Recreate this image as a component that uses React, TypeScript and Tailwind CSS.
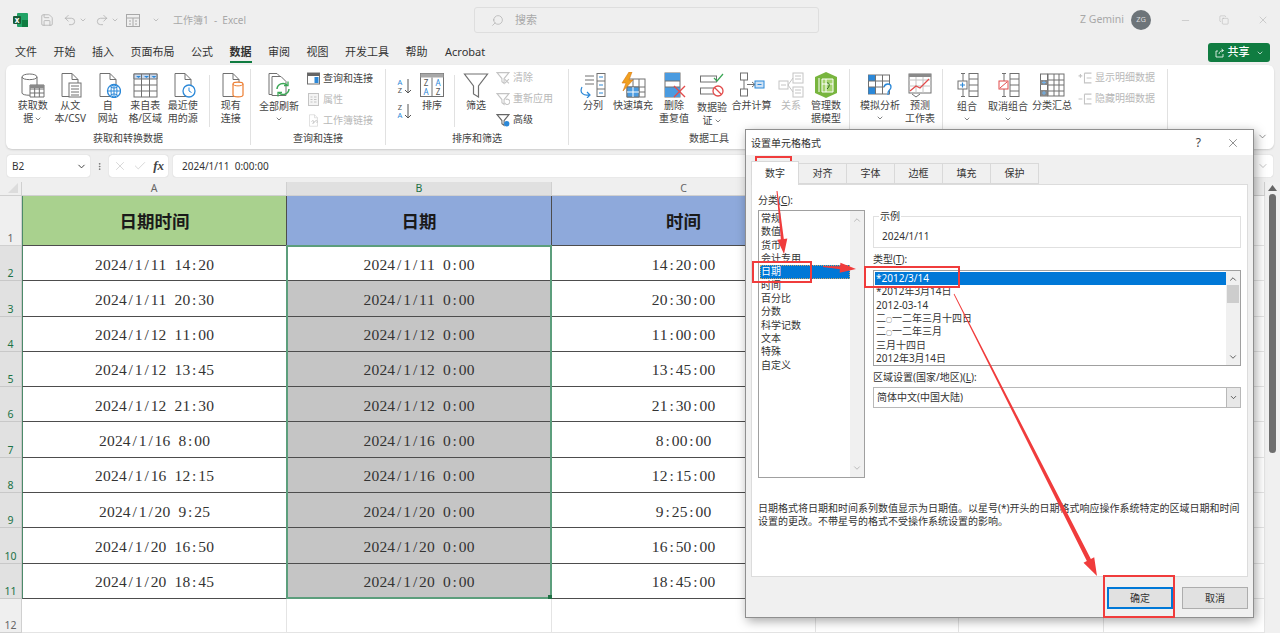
import React from "react";
import { ChevronDown, ChevronUp, Minus, Redo2, Save, Search, Undo2, X, Copy, Check, MoreVertical } from "lucide-react";

const G = "#707070";
const L = "#c4c4c4";
const B = "#2b88d8";

const Doc = ({ c = G }: { c?: string }) => (
  <path d="M5 1.5h10l6 6v17H5zM15 1.5v6h6" fill="#fff" stroke={c} strokeWidth="1" />
);
const Ic = ({ children, s = 26 }: { children: React.ReactNode; s?: number }) => (
  <svg width={s} height={s} viewBox="0 0 26 26" fill="none" className="shrink-0">
    {children}
  </svg>
);
const Mini = ({ x, y, w, h, c, r }: { x: number; y: number; w: number; h: number; c: number; r: number }) => {
  const lines = [];
  for (let i = 0; i <= c; i++) lines.push(<path key={"c" + i} d={`M${x + (w / c) * i} ${y}v${h}`} />);
  for (let i = 0; i <= r; i++) lines.push(<path key={"r" + i} d={`M${x} ${y + (h / r) * i}h${w}`} />);
  return <g stroke={G} strokeWidth="1">{lines}</g>;
};

const icons: Record<string, React.ReactNode> = {
  db: (
    <Ic>
      <path d="M2 5c0-4 15-4 15 0v16c0 3-15 3-15 0z" fill="#fff" stroke={G} />
      <path d="M2 5c0 3.500 15 3.500 15 0" stroke={G} />
      <rect x="10" y="13" width="14" height="12" fill="#fff" />
      <Mini x={10} y={13} w={14} h={12} c={3} r={3} />
      <path d="M10 13h14v3h-14z" fill="#8a8a8a" />
    </Ic>
  ),
  text: (
    <Ic>
      <Doc />
      <rect x="12" y="11" width="12" height="14" fill="#fff" stroke={G} />
      <path d="M14 14h8M14 17h8M14 20h8M14 23h8" stroke={G} />
    </Ic>
  ),
  web: (
    <Ic>
      <Doc />
      <circle cx="19" cy="19" r="6.500" fill="#fff" stroke={B} strokeWidth="1.300" />
      <path d="M12.500 19h13M19 12.500v13M15 14.500c3 2 5 2 8 0M15 23.500c3-2 5-2 8 0" stroke={B} />
      <ellipse cx="19" cy="19" rx="3" ry="6.500" stroke={B} />
    </Ic>
  ),
  table: (
    <Ic>
      <rect x="2" y="2" width="23" height="23" fill="#fff" stroke={G} />
      <path d="M2 2h23v5H2z" fill="#c9d9ee" stroke={G} />
      <path d="M9.500 2v23M17.500 2v23M2 13h23M2 19h23" stroke={G} />
      <path d="M4 4l2.500 2L9 4zM12 4l2.500 2L17 4zM19.500 4l2.500 2 2.500-2z" fill={B} />
    </Ic>
  ),
  recent: (
    <Ic>
      <Doc />
      <circle cx="19" cy="19" r="6" fill="#fff" stroke={B} strokeWidth="1.300" />
      <path d="M19 15.500V19l2.500 1.500" stroke={B} />
    </Ic>
  ),
  exist: (
    <Ic>
      <Doc />
      <path d="M15 12c0-2.500 10-2.500 10 0v11c0 2.500-10 2.500-10 0z" fill="#fff" stroke="#ed7d31" strokeWidth="1.200" />
      <path d="M15 12c0 2.500 10 2.500 10 0" stroke="#ed7d31" />
    </Ic>
  ),
  refresh: (
    <Ic>
      <path d="M3 1.500h8l5 5v16H3z" fill="#fff" stroke={G} />
      <path d="M6 4.500h9l5 5v14H6z" fill="#fff" stroke={G} />
      <path d="M11 17a6 6 0 0 1 10-4M23 17a6 6 0 0 1-10 4" stroke="#3aa655" strokeWidth="1.500" />
      <path d="M22 9.500v4h-4M12 24.500v-4h4" stroke="#3aa655" strokeWidth="1.300" />
    </Ic>
  ),
  sort: (
    <Ic>
      <rect x="1.500" y="1.500" width="23" height="23" fill="#fff" stroke={G} />
      <path d="M1.500 1.500h23v4h-23z" fill="#a8a8a8" />
      <path d="M13 5.500v19" stroke={G} />
      <text x="7" y="14" fontSize="8" textAnchor="middle" fill="#555">Z</text>
      <text x="7" y="23" fontSize="8" textAnchor="middle" fill={B}>A</text>
      <text x="19" y="14" fontSize="8" textAnchor="middle" fill={B}>A</text>
      <text x="19" y="23" fontSize="8" textAnchor="middle" fill="#555">Z</text>
    </Ic>
  ),
  filter: (
    <Ic>
      <path d="M1.500 2h23l-9 12v11l-5-3v-8z" fill="#fff" stroke={G} strokeWidth="1.200" />
    </Ic>
  ),
  split: (
    <Ic>
      <path d="M5 4h9M5 8h9M5 12h9" stroke={G} />
      <rect x="17" y="1.500" width="8" height="23" fill="#fff" stroke={G} />
      <path d="M17 9h8M17 17h8" stroke={G} />
      <path d="M19 5h4M19 13h4M19 21h4" stroke={B} />
      <path d="M2 15c-3 6 2 9 7 8M7 20l3 3-3 3" stroke={B} strokeWidth="1.200" />
    </Ic>
  ),
  flash: (
    <Ic>
      <rect x="7" y="7" width="18" height="18" fill="#fff" stroke={G} />
      <path d="M7 15h18M7 20h18M13 7v18M19 7v18" stroke={G} />
      <path d="M7 15h12v10H7z" fill="#4a9be0" stroke={G} />
      <path d="M7 20h12M13 15v10" stroke="#fff" />
      <path d="M9 0L2 11h4l-3 8 10-11H9l3-8z" fill="#f0a020" stroke="#d87818" strokeWidth=".6" />
    </Ic>
  ),
  dup: (
    <Ic>
      <rect x="4" y="1" width="15" height="24" fill="#fff" stroke={G} />
      <path d="M4 1h15v8H4z" fill="#4a9be0" />
      <path d="M4 15h15v10H4z" fill="#4a9be0" />
      <path d="M4 9h15M4 15h15" stroke={G} />
      <path d="M13 14l11 11M24 14L13 25" stroke="#e24b4b" strokeWidth="1.400" />
    </Ic>
  ),
  valid: (
    <Ic>
      <rect x="1.500" y="4" width="16" height="6" fill="#fff" stroke={G} />
      <rect x="1.500" y="16" width="16" height="6" fill="#fff" stroke={G} />
      <path d="M15 6l3 3 6-7" stroke="#3aa655" strokeWidth="1.200" />
      <circle cx="19" cy="19" r="5" fill="#fff" stroke="#e24b4b" strokeWidth="1.300" />
      <path d="M15.500 15.500l7 7" stroke="#e24b4b" strokeWidth="1.300" />
    </Ic>
  ),
  merge: (
    <Ic>
      <rect x="1.500" y="1" width="7" height="7" stroke={G} />
      <rect x="1.500" y="17" width="7" height="7" stroke={G} />
      <path d="M5 8v9M8 12.500h8M13 10l3 2.500-3 2.500" stroke={G} />
      <rect x="16" y="9" width="9" height="7" fill="#cfe2f5" stroke={B} />
      <path d="M18.500 12.500h4" stroke={B} />
    </Ic>
  ),
  rel: (
    <Ic>
      <rect x="1" y="9" width="9" height="8" stroke={L} />
      <rect x="15" y="1" width="10" height="10" stroke={L} />
      <rect x="15" y="15" width="10" height="10" stroke={L} />
      <path d="M10 13l5-7M10 13l5 7M3 13h5M17 4h6M17 7h6M17 18h6M17 21h6" stroke={L} />
    </Ic>
  ),
  model: (
    <Ic>
      <path d="M13 0l11 5v16l-11 5-11-5V5z" fill="#78b53e" />
      <path d="M9 7h11v13H9z" fill="#a5d36e" stroke="#fff" />
      <path d="M6 6v14M13 7v13M9 12h11" stroke="#fff" />
      <path d="M14 11c3-1 3 4 0 6" stroke="#2f6e1c" />
    </Ic>
  ),
  whatif: (
    <Ic>
      <rect x="1.500" y="3" width="21" height="19" fill="#fff" stroke={G} />
      <path d="M1.500 3h7v6h-7zM1.500 15h7v7h-7z" fill={B} />
      <path d="M8.500 3v19M15.500 3v19M1.500 9h21M1.500 15h21" stroke={G} />
      <path d="M17 15c1-4 7-4 7 0 0 3-3 3-3 6v2" stroke={B} strokeWidth="1.300" fill="#fff" />
    </Ic>
  ),
  forecast: (
    <Ic>
      <rect x="2" y="2" width="22" height="19" fill="#fff" stroke={G} />
      <path d="M2 8h22M2 14h22M9 2v19M16 2v19" stroke={L} />
      <path d="M2 2h22v3H2z" fill="#8a8a8a" />
      <path d="M3 19l6-5 4 2 9-9" stroke="#e24b4b" strokeWidth="1.300" />
      <path d="M5 22l4 3 4-3" stroke={G} />
    </Ic>
  ),
  group: (
    <Ic>
      <rect x="15" y="1.500" width="9" height="23" fill="#fff" stroke={G} />
      <path d="M15 7h9M15 13h9M15 19h9M7 1.500h4M7 24.500h4M9 1.500V10M9 16v8.500" stroke={G} />
      <rect x="4" y="9" width="9" height="8" fill="#fff" stroke={G} />
      <path d="M6 13h5M8.500 10.500v5" stroke={B} strokeWidth="1.200" />
    </Ic>
  ),
  ungroup: (
    <Ic>
      <rect x="15" y="1.500" width="9" height="23" fill="#fff" stroke={G} />
      <path d="M15 7h9M15 13h9M15 19h9M7 1.500h4M7 24.500h4M9 1.500V9M9 17v7.500" stroke={G} />
      <rect x="4" y="9" width="9" height="8" fill="#fff" stroke="#e24b4b" />
      <path d="M5 16l7-6" stroke="#e24b4b" />
    </Ic>
  ),
  subtotal: (
    <Ic>
      <rect x="9" y="2" width="16" height="22" fill="#fff" stroke={G} />
      <path d="M9 8h16M9 13h16M9 19h16M15 2v22M20 2v22" stroke={G} />
      <rect x="1.500" y="2" width="7" height="22" fill="#fff" stroke={G} />
      <path d="M1.500 8h7v5h-7zM1.500 18h7v6h-7z" fill="#888" />
      <path d="M3 10.500h4M3 21h4M5 8.500v4M5 19v4" stroke="#6fb1ec" />
    </Ic>
  ),
};

const small: Record<string, React.ReactNode> = {
  query: (
    <Ic s={13}>
      <rect x="1" y="2" width="24" height="22" fill="#fff" stroke={G} strokeWidth="2" />
      <path d="M1 2h24v6H1z" fill="#666" />
      <rect x="15" y="10" width="8" height="12" fill={B} />
    </Ic>
  ),
  prop: (
    <Ic s={13}>
      <rect x="3" y="1" width="20" height="24" fill="#f4f4f4" stroke={L} strokeWidth="2" />
      <path d="M7 8h4M14 8h5M7 13h4M14 13h5M7 18h4M14 18h5" stroke={L} strokeWidth="2" />
    </Ic>
  ),
  link: (
    <Ic s={13}>
      <Doc c={L} />
      <path d="M11 20l6-6M9 15c4-4 6 0 3 3M17 13c3-2 5 3 2 5" stroke={L} strokeWidth="2" />
    </Ic>
  ),
  clear: (
    <Ic s={14}>
      <path d="M2 3h22l-9 11v9l-4-3v-6z" stroke={L} strokeWidth="2" />
      <path d="M16 15l8 8M24 15l-8 8" stroke={L} strokeWidth="2" />
    </Ic>
  ),
  reapply: (
    <Ic s={14}>
      <path d="M2 3h22l-9 11v9l-4-3v-6z" stroke={L} strokeWidth="2" />
      <path d="M16 20a5 5 0 1 0 2-6" stroke={L} strokeWidth="2" />
    </Ic>
  ),
  adv: (
    <Ic s={14}>
      <path d="M2 3h22l-9 11v9l-4-3v-6z" fill="#fff" stroke="#666" strokeWidth="2" />
      <circle cx="20" cy="20" r="5" fill={B} />
    </Ic>
  ),
  show: (
    <Ic s={14}>
      <path d="M1 9h7M4.500 5.500v7M12 4h13M16 13h9M16 22h9M12 4v18h4" stroke={L} strokeWidth="2" />
    </Ic>
  ),
  hide: (
    <Ic s={14}>
      <path d="M1 13h7M12 4h13M16 13h9M16 22h9M12 4v18h4" stroke={L} strokeWidth="2" />
    </Ic>
  ),
};

const Big = ({
  icon,
  w = 37.5,
  lines,
  off,
  top = 0,
  chev,
}: {
  icon: string;
  w?: number;
  lines: string[];
  off?: boolean;
  top?: number;
  chev?: "inline" | "below";
}) => (
  <div className="flex shrink-0 flex-col items-center" style={{ width: w }}>
    {icons[icon]}
    <div
      className={`whitespace-nowrap text-center text-[10px] leading-[13px] ${off ? "text-[#b8b8b8]" : "text-[#444]"}`}
      style={{ marginTop: 1 + top }}
    >
      {lines.map((t, i) => (
        <div key={i} className="flex items-center justify-center gap-[1px]">
          {t}
          {chev === "inline" && i === lines.length - 1 && <ChevronDown size={8} strokeWidth={2} />}
        </div>
      ))}
      {chev === "below" && (
        <div className="flex justify-center pt-[2px]">
          <ChevronDown size={8} strokeWidth={2} />
        </div>
      )}
    </div>
  </div>
);

const Small = ({ icon, label, off }: { icon: string; label: string; off?: boolean }) => (
  <div className={`flex h-[21px] items-center gap-[3px] whitespace-nowrap text-[10px] ${off ? "text-[#b8b8b8]" : "text-[#444]"}`}>
    {small[icon]}
    {label}
  </div>
);

const Group = ({ w, label, children }: { w: number; label?: string; children: React.ReactNode }) => (
  <div className="my-[4px] flex shrink-0 flex-col border-r border-[#e1e1e1]" style={{ width: w }}>
    <div className="flex h-[65px] pt-[3px]">{children}</div>
    <div className="text-center text-[10px] leading-[13px] text-[#444]">{label}</div>
  </div>
);

const Sep = () => <div className="mx-[2px] mt-[3px] h-[52px] w-px shrink-0 bg-[#e1e1e1]" />;

const TitleBar = () => (
  <div className="flex h-[40px] items-center pl-[13px] text-[#a8a8a8]">
    <svg width="15" height="14" viewBox="0 0 15 14" className="shrink-0">
      <rect x="4" y="0" width="11" height="14" rx="1" fill="#21a366" />
      <rect x="9" y="7" width="6" height="7" fill="#107c41" />
      <rect x="0" y="3" width="8" height="8" rx="1" fill="#185c37" />
      <text x="4" y="9.500" fontSize="8" fontWeight="700" textAnchor="middle" fill="#fff">x</text>
    </svg>
    <Save size={14} strokeWidth={1.2} className="ml-[12px]" />
    <Undo2 size={14} strokeWidth={1.2} className="ml-[9px]" />
    <ChevronDown size={8} className="ml-[2px]" />
    <Redo2 size={14} strokeWidth={1.2} className="ml-[8px]" />
    <ChevronDown size={8} className="ml-[2px]" />
    <svg width="14" height="13" viewBox="0 0 14 13" fill="none" stroke="currentColor" className="ml-[7px]">
      <rect x=".5" y=".5" width="13" height="12" />
      <path d="M.5 4h13M7 4v9M3 7h2M9 7h2M3 10h2M9 10h2" />
    </svg>
    <ChevronDown size={8} className="ml-[12px]" />
    <div className="ml-[13px] w-[301px] text-[10px]">工作簿1&nbsp; -&nbsp; Excel</div>
    <div className="flex h-[26px] w-[345px] items-center rounded-[3px] border border-[#dedede] pl-[16px] text-[11px]">
      <Search size={13} strokeWidth={1.2} className="-scale-x-100" />
      <span className="ml-[11px]">搜索</span>
    </div>
    <div className="ml-[261px] text-[10.500px]">Z Gemini</div>
    <div className="ml-[7px] flex h-[20px] w-[20px] items-center justify-center rounded-full bg-[#6d7479] text-[7.500px] text-[#ddd]">ZG</div>
    <Minus size={11} strokeWidth={1} className="ml-[29px]" />
    <Copy size={10} strokeWidth={1} className="ml-[28px]" />
    <X size={12} strokeWidth={1} className="ml-[28px]" />
  </div>
);

const TABS = ["文件", "开始", "插入", "页面布局", "公式", "数据", "审阅", "视图", "开发工具", "帮助", "Acrobat"];

const MenuBar = () => (
  <div className="flex h-[25px] items-start pl-[15px] pr-[10px]">
    <div className="flex gap-[16.500px] pt-[4px] text-[11px] leading-[16px] text-[#333]">
      {TABS.map((t) => (
        <div key={t} className={t === "数据" ? "h-[19px] border-b-2 border-[#107c41] font-bold" : t === "Acrobat" ? "pl-[1px]" : ""}>
          {t}
        </div>
      ))}
    </div>
    <div className="ml-auto mt-[3px] flex h-[19px] w-[62px] items-center justify-center gap-[3px] rounded-[3px] bg-[#107c41] text-[11px] font-medium text-white">
      <svg width="10" height="10" viewBox="0 0 10 10" fill="none" stroke="#fff" strokeWidth=".8">
        <path d="M3 3H1v6h7V6M4 6c0-2 2-3.500 4-3.500M6.500 1l2 1.500-2 1.500" />
      </svg>
      共享
      <ChevronDown size={8} className="ml-[3px]" />
    </div>
  </div>
);

const Ribbon = () => (
  <div className="relative mx-[6px] flex h-[84px] rounded-[6px] bg-white shadow-[0_1px_2px_rgba(0,0,0,0.15)]">
    <Group w={245} label="获取和转换数据">
      <div className="flex w-[201px] pl-[8px]">
        <Big icon="db" lines={["获取数", "据"]} chev="inline" />
        <Big icon="text" lines={["从文", "本/CSV"]} />
        <Big icon="web" lines={["自", "网站"]} />
        <Big icon="table" lines={["来自表", "格/区域"]} />
        <Big icon="recent" lines={["最近使", "用的源"]} />
      </div>
      <Sep />
      <Big icon="exist" lines={["现有", "连接"]} />
    </Group>
    <Group w={135} label="查询和连接">
      <div className="w-[2px] shrink-0" />
      <Big icon="refresh" w={52} top={1} lines={["全部刷新"]} chev="below" />
      <div className="-mt-[4px] pl-[2px]">
        <Small icon="query" label="查询和连接" />
        <Small icon="prop" label="属性" off />
        <Small icon="link" label="工作簿链接" off />
      </div>
    </Group>
    <Group w={183} label="排序和筛选">
      <div className="flex w-[30px] flex-col items-center gap-[7px] pl-[5px] pt-[5px]">
        <svg width="18" height="18" viewBox="0 0 18 18">
          <text x="5" y="8" fontSize="7.500" fill={B} textAnchor="middle">A</text>
          <text x="5" y="16" fontSize="7.500" fill="#555" textAnchor="middle">Z</text>
          <path d="M13 2v14M10 13l3 3 3-3" stroke="#555" fill="none" />
        </svg>
        <svg width="18" height="18" viewBox="0 0 18 18">
          <text x="5" y="8" fontSize="7.500" fill="#555" textAnchor="middle">Z</text>
          <text x="5" y="16" fontSize="7.500" fill={B} textAnchor="middle">A</text>
          <path d="M13 2v14M10 13l3 3 3-3" stroke="#555" fill="none" />
        </svg>
      </div>
      <Big icon="sort" w={32} lines={["排序"]} />
      <div className="ml-[4px] mr-[3px]"><Sep /></div>
      <Big icon="filter" w={32} lines={["筛选"]} />
      <div className="-mt-[5px] pl-[4px]">
        <Small icon="clear" label="清除" off />
        <Small icon="reapply" label="重新应用" off />
        <Small icon="adv" label="高级" />
      </div>
    </Group>
    <Group w={281} label="数据工具">
      <div className="flex pl-[6px]">
        <Big icon="split" w={36} lines={["分列"]} />
        <Big icon="flash" w={44} lines={["快速填充"]} />
        <Big icon="dup" w={38} lines={["删除", "重复值"]} />
        <Big icon="valid" w={38} top={2} lines={["数据验", "证"]} chev="inline" />
        <Big icon="merge" w={41} lines={["合并计算"]} />
        <Big icon="rel" w={38} lines={["关系"]} off />
        <Big icon="model" w={32} lines={["管理数", "据模型"]} />
      </div>
    </Group>
    <Group w={93} label="">
      <div className="flex pl-[8px]">
        <Big icon="whatif" w={44} lines={["模拟分析"]} chev="below" />
        <Big icon="forecast" w={36} lines={["预测", "工作表"]} />
      </div>
    </Group>
    <Group w={225} label="">
      <div className="flex pl-[6px]">
        <Big icon="group" w={36} top={1} lines={["组合"]} chev="below" />
        <Big icon="ungroup" w={46} top={1} lines={["取消组合"]} chev="below" />
        <Big icon="subtotal" w={42} lines={["分类汇总"]} />
        <div className="-mt-[5px] pl-[5px]">
          <Small icon="show" label="显示明细数据" off />
          <Small icon="hide" label="隐藏明细数据" off />
        </div>
      </div>
    </Group>
    <ChevronDown size={11} strokeWidth={1.4} className="absolute bottom-[7px] right-[6px] text-[#555]" />
  </div>
);

const FormulaBar = () => (
  <div className="mt-[6px] flex h-[22px] items-stretch gap-[5px] pl-[7px] pr-[7px] text-[10px] text-[#333]">
    <div className="flex w-[83px] items-center justify-between rounded-[3px] bg-white pl-[5px] pr-[3px] shadow-[0_0_1px_rgba(0,0,0,0.25)]">
      B2
      <ChevronDown size={11} />
    </div>
    <div className="flex w-[9px] items-center justify-center text-[#666]">
      <MoreVertical size={11} />
    </div>
    <div className="flex w-[59px] items-center justify-between rounded-[3px] bg-white px-[4px] shadow-[0_0_1px_rgba(0,0,0,0.25)]">
      <X size={14} strokeWidth={1} className="text-[#bbb]" />
      <Check size={14} strokeWidth={1} className="text-[#bbb]" />
      <span className="font-['Liberation_Serif',serif] text-[13px] font-bold italic text-[#444]">fx</span>
    </div>
    <div className="flex flex-1 items-center justify-between whitespace-pre rounded-[3px] bg-white pl-[9px] pr-[4px] shadow-[0_0_1px_rgba(0,0,0,0.25)]">
      2024/1/11  0:00:00
      <ChevronDown size={12} strokeWidth={1} className="text-[#888]" />
    </div>
  </div>
);

const COLA = ["2024/1/11 14:20", "2024/1/11 20:30", "2024/1/12 11:00", "2024/1/12 13:45", "2024/1/12 21:30", "2024/1/16 8:00", "2024/1/16 12:15", "2024/1/20 9:25", "2024/1/20 16:50", "2024/1/20 18:45"];
const COLB = ["2024/1/11 0:00", "2024/1/11 0:00", "2024/1/12 0:00", "2024/1/12 0:00", "2024/1/12 0:00", "2024/1/16 0:00", "2024/1/16 0:00", "2024/1/20 0:00", "2024/1/20 0:00", "2024/1/20 0:00"];
const COLC = ["14:20:00", "20:30:00", "11:00:00", "13:45:00", "21:30:00", "8:00:00", "12:15:00", "9:25:00", "16:50:00", "18:45:00"];

// SimSun-like fixed pitch: every glyph sits in a half-em box
const Fixed = ({ text }: { text: string }) => (
  <span className="whitespace-nowrap font-['Liberation_Serif',serif] text-[15.500px] text-[#333]">
    {text.split("").map((ch, i) => (
      <span key={i} className="inline-block w-[7.950px] text-center">
        {ch === " " ? "\u00a0" : ch}
      </span>
    ))}
  </span>
);

const colHead = "flex items-center justify-center border-r border-b border-[#d0d0d0] text-[10.500px] text-[#666]";
const rowHead = "flex items-end justify-center border-b border-r text-[10.500px] leading-[13px]";
const cell = "flex items-center justify-center border-r border-b border-[#4d4d4d] pt-[2px]";
const blank = "border-r border-b border-[#e4e4e4] bg-white";

const Sheet = () => (
  <div className="mt-[5px] flex min-h-0 flex-1">
    <div className="relative grid flex-1 grid-cols-[22px_265px_265px_264px_143px_145px_161px] grid-rows-[14px_50px_repeat(10,35.3px)_1fr]">
      <div className="relative border-r border-b border-[#d0d0d0] bg-[#efefef]">
        <svg width="12" height="12" className="absolute bottom-[1px] right-[2px]"><path d="M1 11L11 1v10z" fill="#dcdcdc" /></svg>
      </div>
      <div className={`${colHead} bg-[#efefef]`}>A</div>
      <div className={`${colHead} bg-[#e0e0e0] text-[#207245]`}>B</div>
      <div className={`${colHead} bg-[#efefef]`}>C</div>
      <div className={`${colHead} bg-[#efefef]`} />
      <div className={`${colHead} bg-[#efefef]`} />
      <div className={`${colHead} bg-[#efefef]`} />

      <div className={`${rowHead} border-[#d0d0d0] bg-[#efefef] text-[#666]`}>1</div>
      <div className={`${cell} border-l border-l-[#4d8a6a] bg-[#a9d18e] text-[17.500px] font-bold leading-none text-[#1a1a1a]`}>日期时间</div>
      <div className={`${cell} bg-[#8ea9db] text-[17.500px] font-bold leading-none text-[#1a1a1a]`}>日期</div>
      <div className={`${cell} bg-[#8ea9db] text-[17.500px] font-bold leading-none text-[#1a1a1a]`}>时间</div>
      <div className={blank} />
      <div className={blank} />
      <div className={blank} />

      {COLA.map((a, i) => (
        <React.Fragment key={a}>
          <div className={`${rowHead} border-[#c8c8c8] bg-[#e1e1e1] text-[#207245]`}>{i + 2}</div>
          <div className={`${cell} border-l border-l-[#4d8a6a] bg-white`}><Fixed text={a} /></div>
          <div className={`${cell} ${i === 0 ? "bg-white" : "bg-[#c5c5c5]"}`}><Fixed text={COLB[i]} /></div>
          <div className={`${cell} bg-white`}><Fixed text={COLC[i]} /></div>
          <div className={blank} />
          <div className={blank} />
          <div className={blank} />
        </React.Fragment>
      ))}

      <div className={`${rowHead} border-[#d0d0d0] bg-[#efefef] text-[#666]`}>12</div>
      <div className={blank} />
      <div className={blank} />
      <div className={blank} />
      <div className={blank} />
      <div className={blank} />
      <div className={blank} />

      {/* selection B2:B11, out of flow inside its grid area */}
      <div className="pointer-events-none absolute -left-px -top-px bottom-0 right-0 col-start-3 col-end-4 row-start-3 row-end-13 border-2 border-[#5c9e7c]">
        <div className="absolute -bottom-[2px] -right-[2px] h-[4px] w-[4px] bg-[#207245]" />
      </div>
    </div>
    <div className="relative flex w-[15px] shrink-0 flex-col items-center bg-[#f0f0f0] pt-[3px]">
      <svg width="9" height="6" viewBox="0 0 9 6"><path d="M4.500 0L9 6H0z" fill="#666" /></svg>
      <div className="mt-[3px] h-[259px] w-[7px] rounded-full bg-[#6e6e6e]" />
    </div>
  </div>
);

const CATS = ["常规", "数值", "货币", "会计专用", "日期", "时间", "百分比", "分数", "科学记数", "文本", "特殊", "自定义"];
const TYPES = ["*2012/3/14", "*2012年3月14日", "2012-03-14", "二○一二年三月十四日", "二○一二年三月", "三月十四日", "2012年3月14日"];
const DTABS = ["对齐", "字体", "边框", "填充", "保护"];

// the zero in the year is set small in the reference's font
const TypeLabel = ({ text }: { text: string }) => {
  const parts = text.split("○");
  if (parts.length === 1) return <>{text}</>;
  return (
    <>
      {parts[0]}
      <span className="text-[6px]">○</span>
      {parts[1]}
    </>
  );
};

const Dialog = () => (
  <div className="absolute left-[745px] top-[129px] flex h-[489px] w-[509px] flex-col border border-[#8f8f8f] bg-[#f0f0f0] text-[10px] text-[#333] shadow-[2px_3px_10px_rgba(0,0,0,0.35)]">
    <div className="flex h-[25px] shrink-0 items-center justify-between bg-white pl-[5px] pr-[13px] leading-none">
      设置单元格格式
      <div className="flex items-center gap-[25px] text-[#444]">
        <span className="text-[12px]">?</span>
        <X size={14} strokeWidth={1} />
      </div>
    </div>
    <div className="flex h-[29px] items-end pl-[5px]">
      <div className="z-10 -mb-px flex h-[24px] w-[48px] items-center justify-center border border-b-0 border-[#d9d9d9] bg-white">数字</div>
      {DTABS.map((t) => (
        <div key={t} className="flex h-[21px] w-[48px] items-center justify-center border border-l-0 border-[#d9d9d9] bg-[#f0f0f0]">
          {t}
        </div>
      ))}
    </div>
    <div className="mx-[5px] flex h-[393px] flex-col border border-[#dcdcdc] bg-white pl-[6px]">
      <div className="flex gap-[8px]">
        <div className="w-[107px] shrink-0">
          <div className="h-[25px] pt-[9px] leading-[13px]">分类(<u>C</u>):</div>
          <div className="flex h-[268px] border border-[#a0a0a0]">
            <div className="flex-1 pl-[1px] pt-[1px]">
              {CATS.map((c) => (
                <div
                  key={c}
                  className={`h-[13.330px] pl-[1px] leading-[13.330px] ${c === "日期" ? "bg-[#0078d7] text-white outline-1 -outline-offset-1 outline-dotted outline-[#c9a56a]" : ""}`}
                >
                  {c}
                </div>
              ))}
            </div>
            <div className="flex w-[14px] flex-col items-center justify-between bg-[#f0f0f0] py-[4px] text-[#b0b0b0]">
              <ChevronUp size={10} />
              <ChevronDown size={10} />
            </div>
          </div>
        </div>
        <div className="w-[368px]">
          <fieldset className="mt-[26px] h-[37px] border border-[#e0e0e0] pl-[5px]">
            <legend className="px-[1px] leading-[11px]">示例</legend>
            <div className="pl-[3px] pt-[8px] leading-[13px]">2024/1/11</div>
          </fieldset>
          <div className="h-[22px] pt-[5px] leading-[13px]">类型(<u>T</u>):</div>
          <div className="flex h-[96px] border border-[#a0a0a0]">
            <div className="flex-1 pl-[1px] pt-px">
              {TYPES.map((t, i) => (
                <div key={t} className={`h-[13.330px] pl-[1px] leading-[13.330px] ${i === 0 ? "bg-[#0078d7] text-white" : ""}`}>
                  <TypeLabel text={t} />
                </div>
              ))}
            </div>
            <div className="flex w-[14px] flex-col items-center bg-[#f0f0f0] py-[3px] text-[#444]">
              <ChevronUp size={10} />
              <div className="mt-[1px] h-[18px] w-[12px] bg-[#cdcdcd]" />
              <div className="flex-1" />
              <ChevronDown size={10} />
            </div>
          </div>
          <div className="h-[21px] pt-[5px] leading-[13px]">区域设置(国家/地区)(<u>L</u>):</div>
          <div className="flex h-[21px] items-center justify-between border border-[#b8b8b8] pl-[3px]">
            简体中文(中国大陆)
            <div className="flex h-full w-[14px] items-center justify-center border-l border-[#b8b8b8] bg-[#e8e8e8]">
              <ChevronDown size={9} />
            </div>
          </div>
        </div>
      </div>
      <div className="mt-[24px] w-[484px] leading-[13.300px]">
        日期格式将日期和时间系列数值显示为日期值。以星号(*)开头的日期格式响应操作系统特定的区域日期和时间设置的更改。不带星号的格式不受操作系统设置的影响。
      </div>
    </div>
    <div className="flex justify-end gap-[9px] pr-[5px] pt-[10px]">
      <div className="flex h-[22px] w-[66px] items-center justify-center border-2 border-[#0078d7] bg-[#e1e1e1]">确定</div>
      <div className="flex h-[22px] w-[66px] items-center justify-center border border-[#adadad] bg-[#e1e1e1]">取消</div>
    </div>
  </div>
);

// tapered red arrow: narrow at the tail, head at the tip
const arrowPoints = (x1: number, y1: number, x2: number, y2: number, w0: number, w1: number, hw: number, hl: number) => {
  const len = Math.hypot(x2 - x1, y2 - y1);
  const ux = (x2 - x1) / len;
  const uy = (y2 - y1) / len;
  const nx = -uy;
  const ny = ux;
  const bx = x2 - ux * hl;
  const by = y2 - uy * hl;
  const p = [
    [x1 + (nx * w0) / 2, y1 + (ny * w0) / 2],
    [bx + (nx * w1) / 2, by + (ny * w1) / 2],
    [bx + (nx * hw) / 2, by + (ny * hw) / 2],
    [x2, y2],
    [bx - (nx * hw) / 2, by - (ny * hw) / 2],
    [bx - (nx * w1) / 2, by - (ny * w1) / 2],
    [x1 - (nx * w0) / 2, y1 - (ny * w0) / 2],
  ];
  return p.map((q) => q.join(",")).join(" ");
};

const Marks = () => (
  <svg width="1280" height="633" className="pointer-events-none absolute left-0 top-0">
    <g fill="none" stroke="#f03c3c" strokeWidth="2">
      <rect x="756" y="157" width="35" height="25" />
      <rect x="753" y="262" width="58" height="20" />
      <rect x="865" y="267" width="94" height="20" />
      <rect x="1104" y="576" width="70" height="41" />
    </g>
    <g fill="#f03c3c">
      <polygon points={arrowPoints(777, 191, 784, 254, 1, 3, 10, 15)} />
      <polygon points={arrowPoints(823, 266.500, 856, 269, 1, 3, 10, 16)} />
      <polygon points={arrowPoints(954, 294, 1097, 576, 0.8, 4.500, 12, 18)} />
    </g>
  </svg>
);

export default function App() {
  return (
    <div className="relative flex h-[633px] w-[1280px] flex-col overflow-hidden bg-[#efefef] font-['Noto_Sans','Noto_Sans_CJK_SC',sans-serif]">
      <TitleBar />
      <MenuBar />
      <Ribbon />
      <FormulaBar />
      <Sheet />
      <Dialog />
      <Marks />
    </div>
  );
}
